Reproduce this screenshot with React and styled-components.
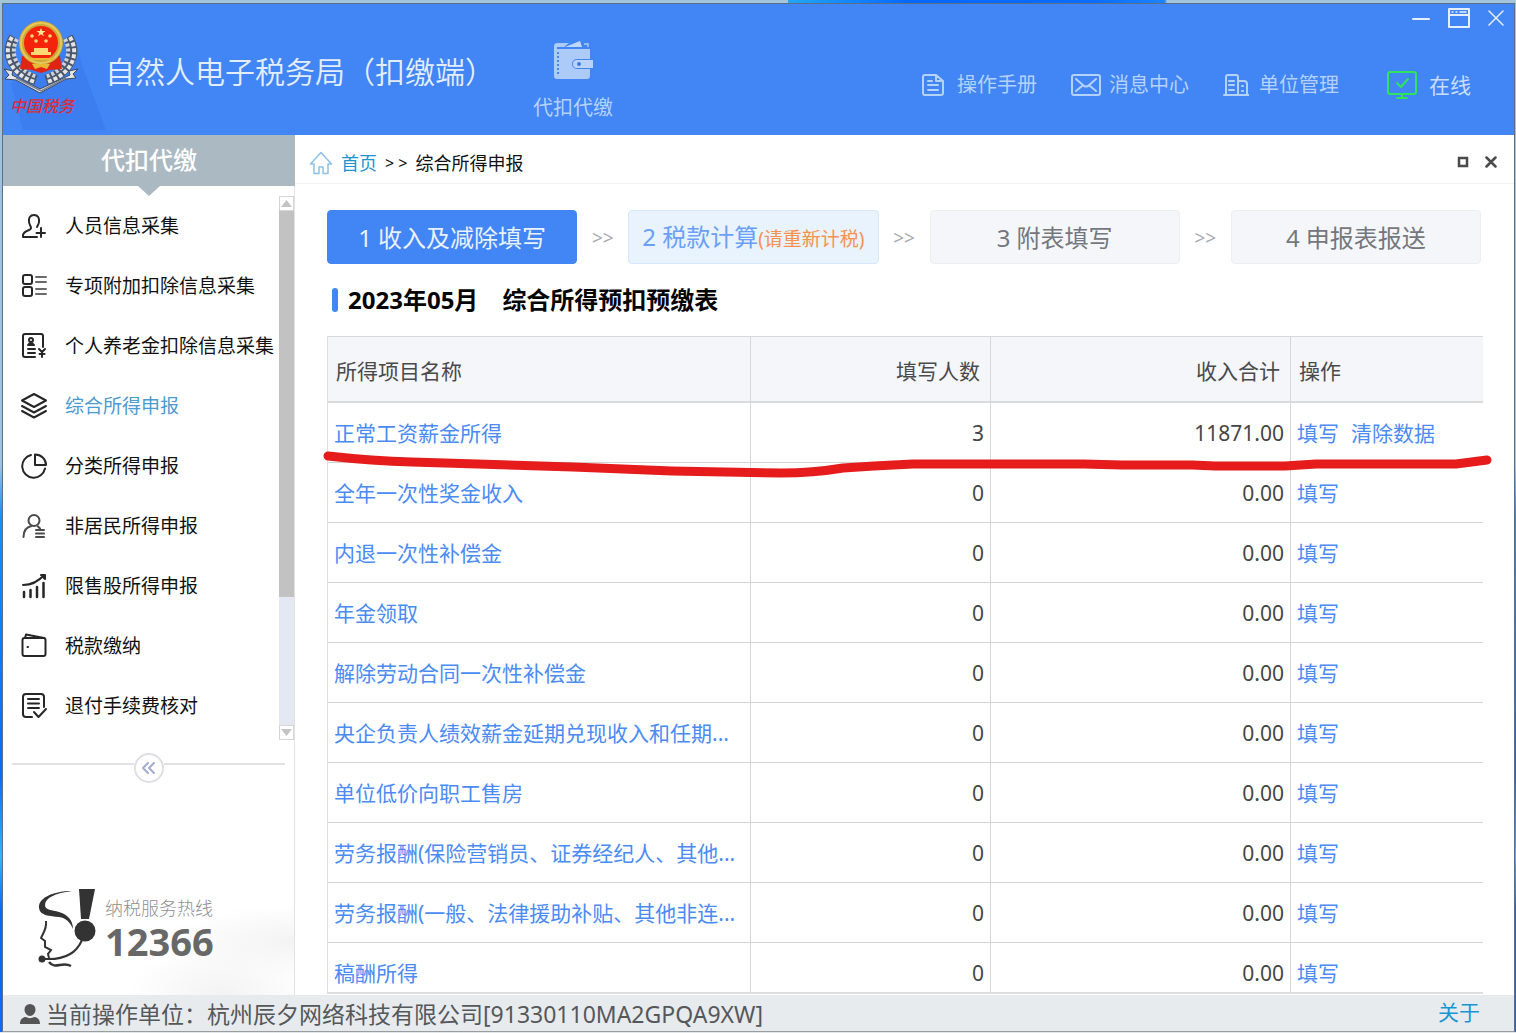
import React, { useState } from "react";
import styled, { createGlobalStyle, css } from "styled-components";

const GlobalStyle = createGlobalStyle`
  *, *::before, *::after { box-sizing: border-box; }
  body {
    margin: 0;
    font-family: "Noto Sans", "Noto Sans CJK SC", sans-serif;
    color: #333;
  }
  button { font: inherit; color: inherit; background: none; border: 0; padding: 0; cursor: pointer; }
  a { text-decoration: none; color: inherit; }
  svg { display: block; flex: none; }
`;

const Desktop = styled.div`
  height: 100vh;
  min-height: 720px;
  display: flex;
  padding: 3px 1px 1px 2px;
  background:
    linear-gradient(90deg, transparent 52%, #22a6f5 52%, #0667fb 60%, #0a6cf8 72%, #1a82fa 76.8%, transparent 77%) top / 100% 3px no-repeat,
    linear-gradient(#a5c5dc, #a5c5dc) top / 100% 3px no-repeat,
    linear-gradient(#e4e7ea, #e4e7ea) bottom / 100% 1px no-repeat,
    linear-gradient(#9fc3df 0 45%, #1590fa 50%, #0a6bf5 75%, #35b5f8 83%, #0a6bf5 88%);
`;

const AppWindow = styled.div`
  flex: 1;
  min-width: 0;
  display: flex;
  flex-direction: column;
  border: 1px solid #5d6f86;
  border-bottom-color: #9a9da0;
  background: #fff;
`;

const Header = styled.header`
  flex: none;
  height: 131px;
  display: flex;
  justify-content: space-between;
  background: #4285f5;
  color: #b4d2fb;
`;

const Brand = styled.div`
  display: flex;
`;

const Logo = styled.div`
  position: relative;
  width: 102px;
  padding: 16px 0 0 1px;
`;

const LogoShade = styled.svg`
  position: absolute;
  left: 0;
  top: 30px;
`;

const LogoArt = styled.svg`
  position: relative;
`;

const LogoName = styled.div`
  position: relative;
  padding-left: 6px;
  font-size: 16px;
  line-height: 20px;
  font-style: italic;
  font-weight: 500;
  color: #dd2b3a;
`;

const AppTitle = styled.h1`
  margin: 0;
  padding-top: 48px;
  font-size: 30px;
  line-height: 40px;
  font-weight: 350;
  color: #e2eefe;
  white-space: nowrap;
`;

const ModuleButton = styled.button`
  align-self: flex-start;
  margin: 36px 0 0 38px;
  display: flex;
  flex-direction: column;
  align-items: center;
  gap: 14px;
  && {
    font-size: 20px;
    line-height: 28px;
    white-space: nowrap;
  }
`;

const HeaderSide = styled.div`
  display: flex;
  flex-direction: column;
  align-items: flex-end;
  padding: 4px 10px 0 0;
`;

const WindowButtons = styled.div`
  display: flex;
  align-items: center;
  gap: 18px;
  height: 20px;
  color: #e6effe;
`;

const Tools = styled.nav`
  display: flex;
  align-items: center;
  gap: 34px;
  margin-top: 43px;
  padding-right: 33px;
`;

const Tool = styled.a`
  display: flex;
  align-items: center;
  gap: ${(p) => p.$gap}px;
  font-size: 20px;
  line-height: 28px;
  white-space: nowrap;
`;

const Online = styled.div`
  display: flex;
  align-items: center;
  gap: 12px;
  margin-left: 14px;
  font-size: 21px;
  line-height: 28px;
  color: #c8defc;
  white-space: nowrap;
`;

const Body = styled.div`
  flex: 1;
  min-height: 0;
  display: flex;
`;

const Sidebar = styled.aside`
  flex: none;
  width: 292px;
  display: flex;
  flex-direction: column;
  border-right: 1px solid #e2e2e4;
`;

const SideTitle = styled.h2`
  position: relative;
  margin: 0 -1px 0 0;
  height: 51px;
  line-height: 50px;
  text-align: center;
  font-size: 24px;
  font-weight: 500;
  color: #fff;
  background: #abb9c2;

  &::after {
    content: "";
    position: absolute;
    top: 100%;
    left: 50%;
    margin-left: -11px;
    border: 11px solid transparent;
    border-top: 10px solid #abb9c2;
    border-bottom: 0;
  }
`;

const MenuArea = styled.div`
  display: flex;
  margin-top: 10px;
`;

const Menu = styled.ul`
  flex: 1;
  margin: 0;
  padding: 0;
  list-style: none;
`;

const MenuLink = styled.a`
  display: flex;
  align-items: center;
  gap: 18px;
  height: 60px;
  padding-left: 18px;
  font-size: 19px;
  line-height: 28px;
  white-space: nowrap;
  color: ${(p) => (p.$active ? "#4b9bd0" : "#111")};
  svg { color: #262626; }
`;

const ScrollBar = styled.div`
  flex: none;
  width: 15px;
  height: 544px;
  display: flex;
  flex-direction: column;
  background: #e4e8f2;
`;

const ScrollButton = styled.button`
  height: 15px;
  display: grid;
  place-items: center;
  background: #fff;
  border: 1px solid #d5d5d5;
  color: #c3c3c3;
`;

const ScrollThumb = styled.div`
  flex: 0 0 386px;
  margin-bottom: auto;
  background: #c2c2c2;
`;

const Divider = styled.div`
  display: flex;
  align-items: center;
  height: 32px;
  margin: 12px 9px 0 9px;

  &::before, &::after {
    content: "";
    flex: 1;
    height: 2px;
    margin-bottom: 8px;
    background: #e2e2e4;
  }
`;

const CollapseButton = styled.button`
  width: 30px;
  height: 30px;
  display: grid;
  place-items: center;
  border: 2px solid #dedfe2;
  border-radius: 50%;
  color: #a3abd0;
`;

const Hotline = styled.div`
  margin-top: auto;
  display: flex;
  align-items: center;
  gap: 8px;
  height: 134px;
  padding-left: 34px;
  background:
    radial-gradient(ellipse at 100% 60%, #f3f3f3 0, transparent 32%),
    radial-gradient(ellipse at 75% 100%, #f3f3f3 0, transparent 30%);
`;

const HotlineText = styled.div`
  display: flex;
  flex-direction: column;
  color: #8f8f8f;
  font-size: 18px;
  line-height: 26px;
  font-weight: 300;
  strong {
    font-size: 38px;
    line-height: 40px;
    font-weight: 700;
    color: #686868;
  }
`;

const Main = styled.main`
  flex: 1;
  min-width: 0;
  display: flex;
  flex-direction: column;
`;

const TopBar = styled.div`
  flex: none;
  height: 49px;
  display: flex;
  align-items: center;
  justify-content: space-between;
  padding: 0 17px 0 14px;
  border-bottom: 1px solid #f1f1f1;
`;

const Crumbs = styled.nav`
  display: flex;
  align-items: center;
  gap: 8px;
  padding-top: 7px;
  font-size: 18px;
  line-height: 26px;
  color: #111;
  white-space: nowrap;
  a { color: #1b95d2; }
`;

const CrumbMark = styled.span`
  font-size: 16px;
`;

const PaneButtons = styled.div`
  display: flex;
  gap: 16px;
  padding-top: 6px;
  color: #4a4a4a;
`;

const Content = styled.div`
  flex: 1;
  min-height: 0;
  display: flex;
  flex-direction: column;
  padding: 26px 31px 1px 32px;
`;

const Steps = styled.div`
  display: flex;
  align-items: center;
  padding-right: 2px;
`;

const tones = {
  current: css`
    background: #4285f5;
    border-color: #4285f5;
    color: #e9f2ff;
  `,
  next: css`
    background: #e8f3fe;
    border-color: #d4e8fd;
    color: #6aa0f7;
  `,
  idle: css`
    background: #f4f6fa;
    border-color: #eceef2;
    color: #74777d;
  `,
};

const Step = styled.button`
  flex: 1;
  min-width: 0;
  height: 54px;
  && {
    padding-top: 2px;
    font-size: 24px;
    line-height: 32px;
    border: 1px solid;
    border-radius: 4px;
    white-space: nowrap;
    ${(p) => tones[p.$tone]}
  }
`;

const StepNote = styled.span`
  font-size: 19px;
  color: #f7914f;
`;

const StepArrow = styled.span`
  flex: none;
  width: 51px;
  padding-top: 2px;
  text-align: center;
  font-size: 19px;
  color: #abadb3;
`;

const SectionTitle = styled.h3`
  display: flex;
  align-items: center;
  margin: 20px 0;
  padding-left: 5px;
  font-size: 24px;
  line-height: 32px;
  font-weight: 700;
  color: #050505;
  white-space: nowrap;

  &::before {
    content: "";
    width: 6px;
    height: 24px;
    margin-right: 10px;
    border-radius: 3px;
    background: #4285f5;
  }
`;

const Period = styled.span`
  margin-right: 24px;
`;

const TableArea = styled.div`
  position: relative;
  flex: 1;
  min-height: 0;
  display: flex;
`;

const TableClip = styled.div`
  flex: 1;
  overflow: hidden;
  border-bottom: 2px solid #dcdee0;
`;

const Table = styled.table`
  width: 100%;
  table-layout: fixed;
  border-collapse: separate;
  border-spacing: 0;
  font-size: 21px;
  line-height: 30px;
  border-top: 1px solid #d6d8db;
  border-left: 1px solid #dcdee1;
`;

const Th = styled.th`
  width: ${(p) => p.$width};
  height: 66px;
  padding: ${(p) => (p.$align === "right" ? "4px 10px 0 0" : "4px 0 0 8px")};
  text-align: ${(p) => p.$align || "left"};
  font-weight: 400;
  color: #4a4a4a;
  background: #f4f6fa;
  border-bottom: 2px solid #d8dadd;
  border-right: 1px solid #d4d6d9;
  &:last-child { border-right: 0; }
`;

const Td = styled.td`
  height: 60px;
  padding: 0 6px;
  text-align: ${(p) => p.$align || "left"};
  color: #454545;
  border-bottom: 1px solid #d2d4d6;
  border-right: 1px solid #d4d6d8;
  white-space: nowrap;
  &:last-child { border-right: 0; }
`;

const CellLink = styled.a`
  color: #4b8bf5;
  & + & { margin-left: 12px; }
`;

const Marker = styled.svg`
  position: absolute;
  left: -4px;
  top: 112px;
  width: calc(100% + 14px);
  height: 32px;
  pointer-events: none;
`;

const StatusBar = styled.footer`
  flex: none;
  height: 36px;
  display: flex;
  align-items: center;
  gap: 6px;
  padding: 2px 34px 0 17px;
  background: #e8ebee;
  color: #55585b;
  font-size: 23px;
  line-height: 32px;
  white-space: nowrap;
  a {
    margin-left: auto;
    padding-bottom: 4px;
    font-size: 21px;
    color: #1a95d4;
  }
`;

const Icon = ({ w, h = w, sw = 2, children, ...rest }) => (
  <svg width={w} height={h} viewBox={`0 0 ${w} ${h}`} fill="none" stroke="currentColor" strokeWidth={sw} strokeLinecap="round" strokeLinejoin="round" aria-hidden="true" {...rest}>
    {children}
  </svg>
);

const Emblem = () => (
  <LogoArt width="74" height="76" viewBox="0 0 74 76" aria-hidden="true">
    <g fill="none">
      <path d="M10 17C0 34 8 52 32 60M64 17C74 34 66 52 42 60" stroke="#4a566b" strokeWidth="10" />
      <path d="M8 17C-2 34 6 54 31 62M66 17C76 34 68 54 43 62" stroke="#e4e6e6" strokeWidth="4" strokeDasharray="4 2" />
      <path d="M13 19C5 34 12 50 33 57M61 19C69 34 62 50 41 57" stroke="#cfd3d6" strokeWidth="4" strokeDasharray="3 2" />
    </g>
    <path d="M18 36h38l2 13-12 1-9 3-9-3-12-1z" fill="#e02412" />
    <circle cx="37" cy="23" r="22" fill="#cda936" />
    <circle cx="37" cy="23" r="20" fill="none" stroke="#e6c95e" strokeWidth="2" />
    <circle cx="37" cy="23" r="17" fill="#f4240c" />
    <path d="M37 8l1.200 3h3.400l-2.800 2 1 3.300-2.800-2-2.800 2 1-3.300-2.800-2h3.400z" fill="#ffe79a" />
    <g fill="#ffd873">
      <circle cx="28" cy="16" r="1.800" /><circle cx="46" cy="16" r="1.800" />
      <circle cx="32" cy="21" r="1.800" /><circle cx="42" cy="21" r="1.800" />
      <path d="M30 28h14v4h3v3H27v-3h3z" />
    </g>
    <path d="M24 38h26v2H24zM28 44h18l-3 5-6-2-6 2z" fill="#e9b936" />
    <path d="M0 49l9 2-1 4 28 14 30-14-1-4 9-2-5 5 3 4-10 1-26 14L12 60 1 59l4-4z" fill="#e3e6e8" stroke="#3c465a" strokeWidth="1" />
    <path d="M12 58l25 13 25-13" fill="none" stroke="#7a828e" strokeWidth="1.500" />
  </LogoArt>
);

const Wallet = () => (
  <svg width="42" height="40" viewBox="0 0 42 40" aria-hidden="true">
    <path d="M2 6q0-3 4-3h11L12 7H5v2h33v10H25a4 4 0 0 0 0 10h13v7q0 3-3 3H5q-3 0-3-3z" fill="#accbf9" />
    <path d="M13 7L28 1l2 6z" fill="#c0d7fb" />
    <path d="M32 4h4v3" fill="none" stroke="#accbf9" strokeWidth="1.500" />
    <path d="M6 12v24" stroke="#4f86e6" strokeWidth="2" strokeDasharray="2 2" />
    <path d="M41 20v8H25a4 4 0 0 1 0-8z" fill="#bad3fa" />
    <circle cx="27" cy="24" r="2" fill="#3f7ae2" />
  </svg>
);

const menuIcons = {
  person: (
    <Icon w={26}>
      <path d="M13 2c-4 0-5.500 3-5 7 .4 3 2 4 2 6 0 3-7 2-8 7v2h14M13 2c4 0 5.500 3 5 7-.3 2.500-1.500 3.500-2 5M20 15v9M15.500 20H24" />
    </Icon>
  ),
  list: (
    <Icon w={26}>
      <rect x="2" y="2" width="9" height="9" rx="2" /><rect x="2" y="14" width="9" height="9" rx="2" />
      <path d="M15 4h10M15 9h10M15 16h10M15 21h10" stroke="#6a6a6a" />
    </Icon>
  ),
  pension: (
    <Icon w={26}>
      <path d="M14 24H4q-2 0-2-2V3q0-2 2-2h16q2 0 2 2v11" />
      <circle cx="10" cy="7" r="2" /><path d="M7 12q3-4 6 0zM7 16h7M7 20h7M18 16l3 3 3-3M21 19v5M18.500 21h5" />
    </Icon>
  ),
  layers: (
    <Icon w={26}>
      <path d="M13 1l12 6.500L13 14 1 7.500zM1 13l12 6.500L25 13M1 18l12 6.500L25 18" />
    </Icon>
  ),
  pie: (
    <Icon w={26}>
      <path d="M10 2A11.500 11.500 0 1 0 24 15.500M14 1.500V12h11C25 6 20 1.500 14 1.500z" />
    </Icon>
  ),
  resident: (
    <Icon w={26}>
      <g stroke="#4a4a4a"><circle cx="13" cy="7.500" r="5.500" /><path d="M2.500 24c0-6 3-10 8-11M17 13.500l2 2M15 17h8M15 20.500h8M15 24h8" /></g>
    </Icon>
  ),
  growth: (
    <Icon w={26}>
      <path d="M2 12c9 0 15-3 21-10M20 2h4v4z" /><path d="M3 19v5M9.500 17v7M16 14v10M22.500 10v14" strokeWidth="2.500" />
    </Icon>
  ),
  folder: (
    <Icon w={26}>
      <rect x="1.500" y="5" width="23" height="18" rx="2" /><path d="M4 5l1-3.500L23 5" /><path d="M6.500 14h.5" />
    </Icon>
  ),
  receipt: (
    <Icon w={26}>
      <path d="M11 24H5q-3 0-3-3V4q0-3 3-3h15q3 0 3 3v10M7 6h11M7 10.500h11M7 15h11M13 19l4.500 5L25 16" />
    </Icon>
  ),
};

const menu = [
  ["人员信息采集", "person"],
  ["专项附加扣除信息采集", "list"],
  ["个人养老金扣除信息采集", "pension"],
  ["综合所得申报", "layers"],
  ["分类所得申报", "pie"],
  ["非居民所得申报", "resident"],
  ["限售股所得申报", "growth"],
  ["税款缴纳", "folder"],
  ["退付手续费核对", "receipt"],
];

const rows = [
  ["正常工资薪金所得", "3", "11871.00", true],
  ["全年一次性奖金收入", "0", "0.00"],
  ["内退一次性补偿金", "0", "0.00"],
  ["年金领取", "0", "0.00"],
  ["解除劳动合同一次性补偿金", "0", "0.00"],
  ["央企负责人绩效薪金延期兑现收入和任期...", "0", "0.00"],
  ["单位低价向职工售房", "0", "0.00"],
  ["劳务报酬(保险营销员、证券经纪人、其他...", "0", "0.00"],
  ["劳务报酬(一般、法律援助补贴、其他非连...", "0", "0.00"],
  ["稿酬所得", "0", "0.00"],
];

export default function App() {
  const [active, setActive] = useState("综合所得申报");
  return (
    <>
      <GlobalStyle />
      <Desktop>
        <AppWindow>
          <Header>
            <Brand>
              <Logo>
                <LogoShade width="104" height="98" viewBox="0 0 104 98" aria-hidden="true">
                  <path d="M8 50L20 96h83L80 34 72 4z" fill="#3c7df0" />
                </LogoShade>
                <Emblem />
                <LogoName>中国税务</LogoName>
              </Logo>
              <AppTitle>自然人电子税务局（扣缴端）</AppTitle>
              <ModuleButton type="button">
                <Wallet />
                代扣代缴
              </ModuleButton>
            </Brand>
            <HeaderSide>
              <WindowButtons>
                <button type="button" aria-label="最小化"><Icon w={18}><path d="M1 10h16" /></Icon></button>
                <button type="button" aria-label="最大化">
                  <Icon w={22} h={20}><path d="M1 1h20v18H1zM1 7h20" /><path d="M4 4h1M8 4h1M12 4h6" strokeWidth="1.500" /></Icon>
                </button>
                <button type="button" aria-label="关闭"><Icon w={16} sw={1.5}><path d="M1 1l14 14M15 1L1 15" /></Icon></button>
              </WindowButtons>
              <Tools>
                <Tool href="#manual" $gap={12}>
                  <Icon w={24}><path d="M15 2H4q-2 0-2 2v16q0 2 2 2h16q2 0 2-2V8zM15 2v6h6M7 8h4M7 12h10M7 17h10" /></Icon>
                  操作手册
                </Tool>
                <Tool href="#messages" $gap={8}>
                  <Icon w={30} h={24}><rect x="1" y="2" width="28" height="20" rx="2" /><path d="M5 6l8 7q2 1 4 0l8-7M5 18l6-5M25 18l-6-5" /></Icon>
                  消息中心
                </Tool>
                <Tool href="#units" $gap={10}>
                  <Icon w={26} h={24}><path d="M3 22V4q0-2 2-2h8q2 0 2 2v18M15 8h6q3 0 3 3v11M1 22h25M6 8h5M6 12h5M6 17h5M19 13h1M19 18h1" /></Icon>
                  单位管理
                </Tool>
                <Online>
                  <Icon w={30} h={28} stroke="#2fe35c"><rect x="1" y="1" width="28" height="22" rx="2" /><path d="M10 12l4 4 7-8M15 23v4M10 27h10" /></Icon>
                  在线
                </Online>
              </Tools>
            </HeaderSide>
          </Header>
          <Body>
            <Sidebar>
              <SideTitle>代扣代缴</SideTitle>
              <MenuArea>
                <Menu>
                  {menu.map(([label, icon]) => (
                    <li key={label}>
                      <MenuLink href="#menu" $active={active === label} onClick={() => setActive(label)}>
                        {menuIcons[icon]}
                        {label}
                      </MenuLink>
                    </li>
                  ))}
                </Menu>
                <ScrollBar>
                  <ScrollButton type="button" aria-label="向上滚动">
                    <svg width="11" height="7" viewBox="0 0 11 7"><path d="M0 7l5.500-7L11 7z" fill="currentColor" /></svg>
                  </ScrollButton>
                  <ScrollThumb />
                  <ScrollButton type="button" aria-label="向下滚动">
                    <svg width="11" height="7" viewBox="0 0 11 7"><path d="M0 0l5.500 7L11 0z" fill="currentColor" /></svg>
                  </ScrollButton>
                </ScrollBar>
              </MenuArea>
              <Divider>
                <CollapseButton type="button" aria-label="收起菜单">
                  <Icon w={14} h={12}><path d="M6 1L1 6l5 5M12 1L7 6l5 5" /></Icon>
                </CollapseButton>
              </Divider>
              <Hotline>
                <svg width="60" height="80" viewBox="0 0 60 80" aria-hidden="true">
                  <path d="M35 3C14 3 1 11 2 20c1 8 11 8 20 9 7 1 11 5 14 12 0-9-6-15-14-17-7-2-14-2-14-7C8 10 18 5 35 3z" fill="#333" />
                  <path d="M42 1h16l-6 30h-8z" fill="#333" />
                  <circle cx="48" cy="43" r="10.500" fill="#333" />
                  <path d="M9 33c1 8-3 12-5 17l4 3v6l6 3-3 4 1 4M45 52C40 64 28 72 8 71" fill="none" stroke="#333" strokeWidth="2" />
                  <circle cx="5" cy="71" r="3.500" fill="#333" />
                  <path d="M12 74c6 8 13-1 22 4" fill="none" stroke="#333" strokeWidth="2.500" />
                </svg>
                <HotlineText>
                  纳税服务热线
                  <strong>12366</strong>
                </HotlineText>
              </Hotline>
            </Sidebar>
            <Main>
              <TopBar>
                <Crumbs>
                  <Icon w={24} stroke="#8cc2e6" sw={1.5}><path d="M1.500 13L12 1.500 22.500 13H19v9.500h-5V16h-4v6.500H5V13z" /></Icon>
                  <a href="#home">首页</a>
                  <CrumbMark>&gt; &gt;</CrumbMark>
                  <span>综合所得申报</span>
                </Crumbs>
                <PaneButtons>
                  <button type="button" aria-label="还原"><Icon w={12} sw={2.5}><path d="M2 2h8v8H2z" strokeLinejoin="miter" /></Icon></button>
                  <button type="button" aria-label="关闭页面"><Icon w={12} sw={2.5}><path d="M1.500 1.500l9 9M10.500 1.500l-9 9" /></Icon></button>
                </PaneButtons>
              </TopBar>
              <Content>
                <Steps>
                  <Step type="button" $tone="current">1 收入及减除填写</Step>
                  <StepArrow>&gt;&gt;</StepArrow>
                  <Step type="button" $tone="next">2 税款计算<StepNote>(请重新计税)</StepNote></Step>
                  <StepArrow>&gt;&gt;</StepArrow>
                  <Step type="button" $tone="idle">3 附表填写</Step>
                  <StepArrow>&gt;&gt;</StepArrow>
                  <Step type="button" $tone="idle">4 申报表报送</Step>
                </Steps>
                <SectionTitle>
                  <Period>2023年05月</Period>
                  <span>综合所得预扣预缴表</span>
                </SectionTitle>
                <TableArea>
                  <TableClip>
                    <Table>
                      <thead>
                        <tr>
                          <Th>所得项目名称</Th>
                          <Th $width="240px" $align="right">填写人数</Th>
                          <Th $width="300px" $align="right">收入合计</Th>
                          <Th $width="192px">操作</Th>
                        </tr>
                      </thead>
                      <tbody>
                        {rows.map(([name, count, total, clearable]) => (
                          <tr key={name}>
                            <Td><CellLink href="#item">{name}</CellLink></Td>
                            <Td $align="right">{count}</Td>
                            <Td $align="right">{total}</Td>
                            <Td>
                              <CellLink href="#fill">填写</CellLink>
                              {clearable && <CellLink href="#clear">清除数据</CellLink>}
                            </Td>
                          </tr>
                        ))}
                      </tbody>
                    </Table>
                  </TableClip>
                  <Marker viewBox="0 0 1170 32" preserveAspectRatio="none" aria-hidden="true">
                    <path
                      d="M5 8Q50 13 89 14L250 19 349 23 458 25Q490 25 520 20L551 18 590 16H761L799 17H869L892 18H962L993 16H1133L1164 12"
                      fill="none" stroke="#e61b1b" strokeWidth="9" strokeLinecap="round" strokeLinejoin="round"
                    />
                  </Marker>
                </TableArea>
              </Content>
            </Main>
          </Body>
          <StatusBar>
            <svg width="20" height="20" viewBox="0 0 20 20" aria-hidden="true">
              <path d="M10 0a5.500 5.500 0 0 1 5.500 5.500C15.500 9 13 12 10 12S4.500 9 4.500 5.500A5.500 5.500 0 0 1 10 0zM0 20c0-5 3-7 6-7 2 1.500 6 1.500 8 0 3 0 6 2 6 7z" fill="#555" />
            </svg>
            <span>当前操作单位：杭州辰夕网络科技有限公司[91330110MA2GPQA9XW]</span>
            <a href="#about">关于</a>
          </StatusBar>
        </AppWindow>
      </Desktop>
    </>
  );
}
